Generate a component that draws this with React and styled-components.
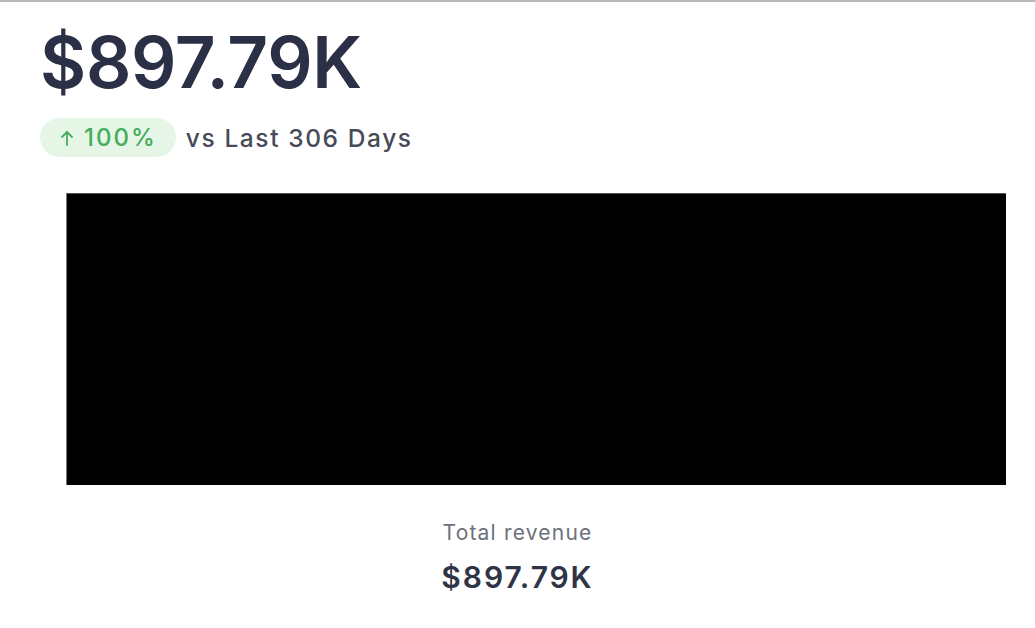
import React from 'react'
import styled, { createGlobalStyle } from 'styled-components'

const GlobalStyle = createGlobalStyle`
  html, body {
    margin: 0;
    padding: 0;
    background: #ffffff;
    font-family: Inter, "Noto Sans", sans-serif;
  }
`

const Page = styled.div`
  width: 1035px;
  height: 628px;
  box-sizing: border-box;
  border-top: 2px solid #b9b9b9;
  display: flex;
  flex-direction: column;
  overflow: hidden;
`

const Header = styled.div`
  padding: 20px 0 0 40px;
  display: flex;
  flex-direction: column;
`

const BigValue = styled.div`
  font-size: 71px;
  font-weight: 600;
  line-height: 80px;
  letter-spacing: -0.3px;
  color: #2b3046;
`

const TrendRow = styled.div`
  display: flex;
  align-items: center;
  gap: 10px;
  margin-top: 16px;
`

const Badge = styled.div`
  display: flex;
  align-items: center;
  gap: 10px;
  height: 39px;
  padding: 0 19px 0 20px;
  border-radius: 20px;
  background: #e5f6e7;
  color: #45ad5c;
  font-size: 24px;
  font-weight: 500;
  letter-spacing: 2px;
`

const Compare = styled.span`
  font-size: 24.5px;
  font-weight: 500;
  letter-spacing: 1.6px;
  color: #464b57;
`

const ChartArea = styled.div`
  margin: 36px 0 0 66px;
  width: 940px;
  height: 292px;
  background: #000000;
  border-top: 1px solid #555;
  border-left: 1px solid #777;
  box-sizing: border-box;
`

const Summary = styled.div`
  display: flex;
  flex-direction: column;
  align-items: center;
  margin-top: 34px;
`

const SummaryLabel = styled.div`
  font-size: 21px;
  color: #6c717c;
  letter-spacing: 1.2px;
  line-height: 28px;
`

const SummaryValue = styled.div`
  font-size: 30px;
  font-weight: 600;
  color: #2f3446;
  letter-spacing: 1.9px;
  line-height: 36px;
  margin-top: 12px;
`

const ArrowUp = () => (
  <svg width="14" height="16" viewBox="0 0 14 16" fill="none" stroke="currentColor" strokeWidth="1.8" strokeLinecap="round" strokeLinejoin="round">
    <path d="M7 15V2" />
    <path d="M2 7l5-5 5 5" />
  </svg>
)

export default function App() {
  return (
    <>
      <GlobalStyle />
      <Page>
        <Header>
          <BigValue>$897.79K</BigValue>
          <TrendRow>
            <Badge>
              <ArrowUp />
              <span>100%</span>
            </Badge>
            <Compare>vs Last 306 Days</Compare>
          </TrendRow>
        </Header>
        <ChartArea />
        <Summary>
          <SummaryLabel>Total revenue</SummaryLabel>
          <SummaryValue>$897.79K</SummaryValue>
        </Summary>
      </Page>
    </>
  )
}
